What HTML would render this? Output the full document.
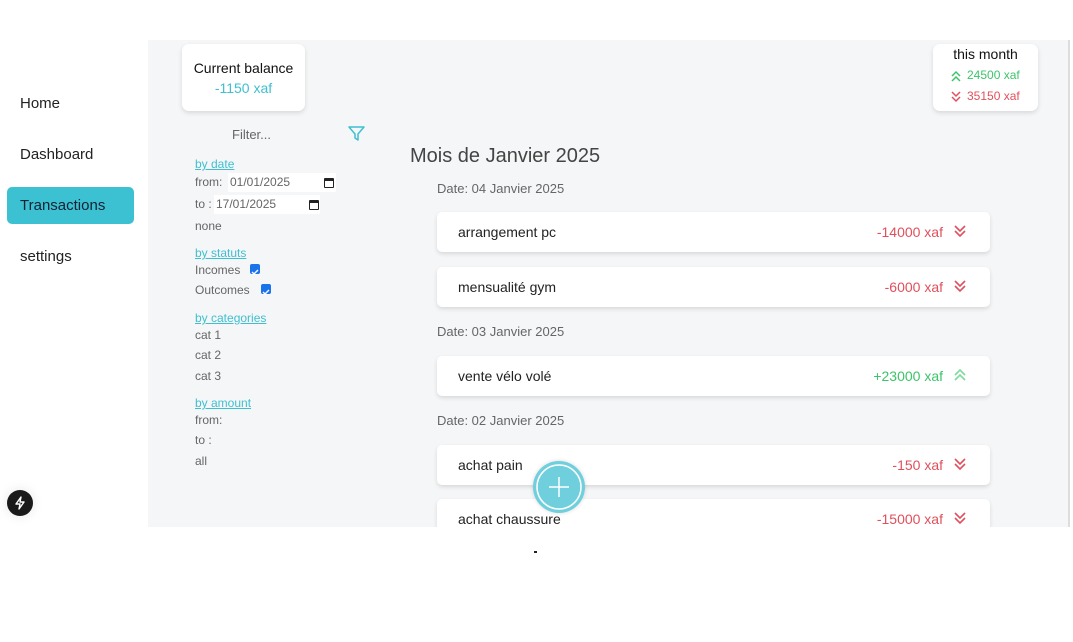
<!DOCTYPE html><html><head><style>
*{margin:0;padding:0;box-sizing:border-box}
body{width:1073px;height:642px;background:#fff;font-family:"Liberation Sans",sans-serif;position:relative;overflow:hidden;color:#222}
.a{position:absolute;white-space:nowrap}
.main{position:absolute;left:148px;top:40px;width:922px;height:487px;background:#f5f6f8;overflow:hidden;border-right:2px solid #ddd}
.card{position:absolute;left:289px;width:553px;height:40px;background:#fff;border-radius:5px;box-shadow:0 2px 4px rgba(0,0,0,.12);font-size:14px}
.card .t{position:absolute;left:21px;top:12px;color:#222}
.card .v{position:absolute;right:47px;top:12px}
.card svg{position:absolute;right:24px;top:13px}
.red{color:#e0505c}.grn{color:#3cc46a}
.lk{color:#3fbfd0;text-decoration:underline;font-size:12px}
.g{color:#666;font-size:12px}
.date{position:absolute;left:289px;font-size:13px;color:#666}
.cb{position:absolute;width:10px;height:10px;background:#1a73e8;border-radius:2px}
</style></head><body>
<div class="a" style="left:20px;top:95px;font-size:15px">Home</div>
<div class="a" style="left:20px;top:146px;font-size:15px">Dashboard</div>
<div class="a" style="left:7px;top:187px;width:127px;height:37px;background:#3cc1d2;border-radius:5px"></div>
<div class="a" style="left:20px;top:197px;font-size:15px;color:#123">Transactions</div>
<div class="a" style="left:20px;top:248px;font-size:15px">settings</div>
<div class="a" style="left:7px;top:490px;width:26px;height:26px;border-radius:50%;background:#1a1a1a;box-shadow:0 0 12px rgba(0,0,0,.1)"><svg width="26" height="26" viewBox="0 0 26 26"><path d="M14 7 L9 14 L13 14 L12 19 L17 12 L13 12 Z" fill="none" stroke="#fff" stroke-width="1.4" stroke-linejoin="round"/></svg></div>
<div class="main">
 <div class="a" style="left:34px;top:4px;width:123px;height:67px;background:#fff;border-radius:7px;box-shadow:0 2px 5px rgba(0,0,0,.12)"></div>
 <div class="a" style="left:34px;top:20px;width:123px;text-align:center;font-size:14px;color:#111">Current balance</div>
 <div class="a" style="left:34px;top:40px;width:123px;text-align:center;font-size:14px;color:#3fbfd0">-1150 xaf</div>
 <div class="a" style="left:785px;top:4px;width:105px;height:67px;background:#fff;border-radius:7px;box-shadow:0 2px 5px rgba(0,0,0,.12)"></div>
 <div class="a" style="left:785px;top:6px;width:105px;text-align:center;font-size:14px;color:#111">this month</div>
 <svg class="a" style="left:802px;top:30px" width="12" height="12" viewBox="0 0 12 12"><path d="M2 6 L6 2 L10 6 M2 11 L6 7 L10 11" fill="none" stroke="#3cc46a" stroke-width="1.5"/></svg>
 <div class="a grn" style="left:819px;top:28px;font-size:12px">24500 xaf</div>
 <svg class="a" style="left:802px;top:51px" width="12" height="12" viewBox="0 0 12 12"><path d="M2 1 L6 5 L10 1 M2 6 L6 10 L10 6" fill="none" stroke="#e0505c" stroke-width="1.5"/></svg>
 <div class="a red" style="left:819px;top:49px;font-size:12px">35150 xaf</div>
 <div class="a" style="left:84px;top:87px;font-size:13px;color:#666">Filter...</div>
 <svg class="a" style="left:200px;top:86px" width="17" height="15" viewBox="0 0 17 15"><path d="M1 1 H16 L10 8 V14 L7 12 V8 Z" fill="none" stroke="#3fbfd0" stroke-width="1.5" stroke-linejoin="round"/></svg>
 <div class="a lk" style="left:47px;top:117px">by date</div>
 <div class="a g" style="left:47px;top:135px">from:</div>
 <div class="a" style="left:80px;top:133px;width:108px;height:19px;background:#fff"></div>
 <div class="a g" style="left:82px;top:135px">01/01/2025</div>
 <div class="a" style="left:176px;top:138px;width:10px;height:10px;border:1.5px solid #222;border-top-width:3px;border-radius:1px"></div>
 <div class="a g" style="left:47px;top:157px">to :</div>
 <div class="a" style="left:66px;top:155px;width:106px;height:19px;background:#fff"></div>
 <div class="a g" style="left:68px;top:157px">17/01/2025</div>
 <div class="a" style="left:161px;top:160px;width:10px;height:10px;border:1.5px solid #222;border-top-width:3px;border-radius:1px"></div>
 <div class="a g" style="left:47px;top:179px">none</div>
 <div class="a lk" style="left:47px;top:206px">by statuts</div>
 <div class="a g" style="left:47px;top:223px">Incomes</div>
 <div class="cb" style="left:102px;top:224px"><svg width="10" height="10" viewBox="0 0 10 10"><path d="M2 5 L4 7 L8 3" fill="none" stroke="#fff" stroke-width="1.4"/></svg></div>
 <div class="a g" style="left:47px;top:243px">Outcomes</div>
 <div class="cb" style="left:113px;top:244px"><svg width="10" height="10" viewBox="0 0 10 10"><path d="M2 5 L4 7 L8 3" fill="none" stroke="#fff" stroke-width="1.4"/></svg></div>
 <div class="a lk" style="left:47px;top:271px">by categories</div>
 <div class="a g" style="left:47px;top:288px">cat 1</div>
 <div class="a g" style="left:47px;top:308px">cat 2</div>
 <div class="a g" style="left:47px;top:329px">cat 3</div>
 <div class="a lk" style="left:47px;top:356px">by amount</div>
 <div class="a g" style="left:47px;top:373px">from:</div>
 <div class="a g" style="left:47px;top:393px">to :</div>
 <div class="a g" style="left:47px;top:414px">all</div>
 <div class="a" style="left:262px;top:105px;font-size:20px;color:#444">Mois de Janvier 2025</div>
 <div class="date" style="top:141px">Date: 04 Janvier 2025</div>
 <div class="card" style="top:172px"><span class="t">arrangement pc</span><span class="v red">-14000 xaf</span><svg width="12" height="13" viewBox="0 0 12 13"><path d="M1 1 L6 6 L11 1 M1 6 L6 11 L11 6" fill="none" stroke="#e0505c" stroke-width="1.6"/></svg></div>
 <div class="card" style="top:227px"><span class="t">mensualité gym</span><span class="v red">-6000 xaf</span><svg width="12" height="13" viewBox="0 0 12 13"><path d="M1 1 L6 6 L11 1 M1 6 L6 11 L11 6" fill="none" stroke="#e0505c" stroke-width="1.6"/></svg></div>
 <div class="date" style="top:284px">Date: 03 Janvier 2025</div>
 <div class="card" style="top:316px"><span class="t">vente vélo volé</span><span class="v grn">+23000 xaf</span><svg width="12" height="13" viewBox="0 0 12 13"><path d="M1 6 L6 1 L11 6 M1 11 L6 6 L11 11" fill="none" stroke="#7ddc9a" stroke-width="1.6"/></svg></div>
 <div class="date" style="top:373px">Date: 02 Janvier 2025</div>
 <div class="card" style="top:405px"><span class="t">achat pain</span><span class="v red">-150 xaf</span><svg width="12" height="13" viewBox="0 0 12 13"><path d="M1 1 L6 6 L11 1 M1 6 L6 11 L11 6" fill="none" stroke="#e0505c" stroke-width="1.6"/></svg></div>
 <div class="card" style="top:459px"><span class="t">achat chaussure</span><span class="v red">-15000 xaf</span><svg width="12" height="13" viewBox="0 0 12 13"><path d="M1 1 L6 6 L11 1 M1 6 L6 11 L11 6" fill="none" stroke="#e0505c" stroke-width="1.6"/></svg></div>
 <div class="a" style="left:385px;top:421px;width:52px;height:52px;border-radius:50%;background:#6fcfdc;box-shadow:0 0 4px rgba(0,0,0,.15)"><svg width="52" height="52" viewBox="0 0 52 52"><circle cx="26" cy="26" r="22" fill="none" stroke="#fff" stroke-width="1.5"/><path d="M26 16 V36 M16 26 H36" stroke="#fff" stroke-width="1.5"/></svg></div>
</div>
<div class="a" style="left:534px;top:551px;width:3px;height:2px;background:#222"></div>
</body></html>
